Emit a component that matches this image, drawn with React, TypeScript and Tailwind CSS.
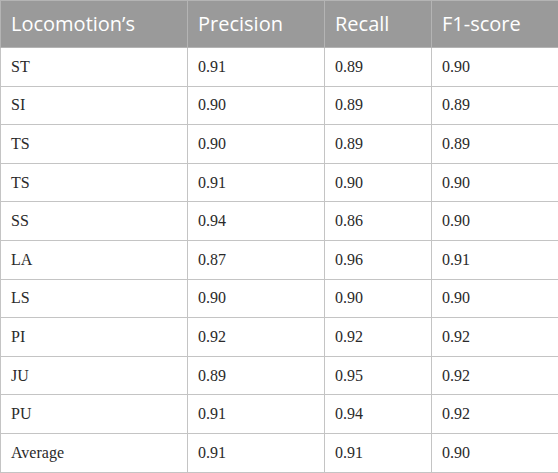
import React from 'react';

const rows: [string, string, string, string][] = [
    ['ST', '0.91', '0.89', '0.90'],
    ['SI', '0.90', '0.89', '0.89'],
    ['TS', '0.90', '0.89', '0.89'],
    ['TS', '0.91', '0.90', '0.90'],
    ['SS', '0.94', '0.86', '0.90'],
    ['LA', '0.87', '0.96', '0.91'],
    ['LS', '0.90', '0.90', '0.90'],
    ['PI', '0.92', '0.92', '0.92'],
    ['JU', '0.89', '0.95', '0.92'],
    ['PU', '0.91', '0.94', '0.92'],
    ['Average', '0.91', '0.91', '0.90'],
];

const headers = ['Locomotion’s', 'Precision', 'Recall', 'F1-score'];

export default function App() {
    return (
        <div className="w-[558px] h-[473px] bg-white">
            <table className="w-[558px] border-collapse table-fixed">
                <colgroup>
                    <col className="w-[187px]" />
                    <col className="w-[137px]" />
                    <col className="w-[107px]" />
                    <col className="w-[127px]" />
                </colgroup>
                <thead>
                    {/* Header row */}
                    <tr className="h-[47px] bg-[#9a9a9a]">
                        {headers.map((h) => (
                            <th
                                key={h}
                                className="border border-[#b4b4b4] px-[10px] text-left font-normal text-white text-[20px] font-['Open_Sans',sans-serif]"
                            >
                                {h}
                            </th>
                        ))}
                    </tr>
                </thead>
                <tbody>
                    {rows.map((r, i) => (
                        <tr key={i} className="h-[38.6px]">
                            {r.map((c, j) => (
                                <td
                                    key={j}
                                    className="border border-[#c4c4c4] px-[10px] text-[16px] text-[#2a2a2a] font-['Liberation_Serif',serif]"
                                >
                                    {c}
                                </td>
                            ))}
                        </tr>
                    ))}
                </tbody>
            </table>
        </div>
    );
}
